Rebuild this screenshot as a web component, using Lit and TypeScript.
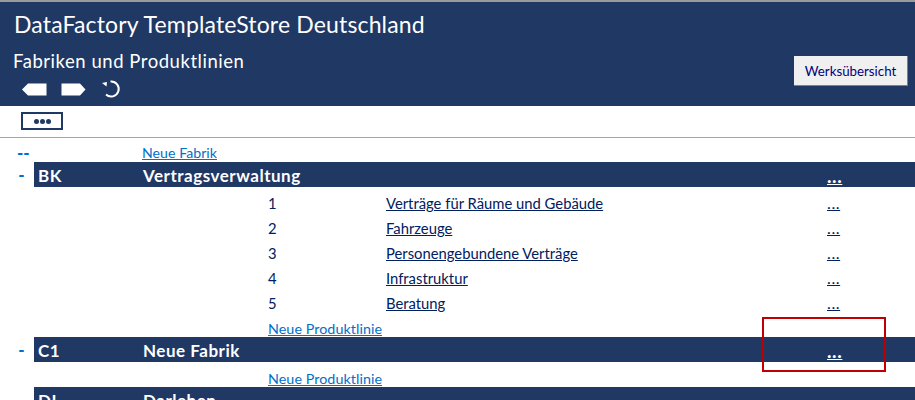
import { LitElement, html, css } from "lit";
import { customElement } from "lit/decorators.js";

const lines = [
  ["1", "Verträge für Räume und Gebäude"],
  ["2", "Fahrzeuge"],
  ["3", "Personengebundene Verträge"],
  ["4", "Infrastruktur"],
  ["5", "Beratung"],
];

@customElement("app-root")
export class AppRoot extends LitElement {
  static styles = css`
    :host {
      display: block;
      width: 915px;
      height: 400px;
      overflow: hidden;
      position: relative;
      background: #fff;
      font-family: Lato, "Open Sans", sans-serif;
      font-size: 14.8px;
      color: #002060;
    }
    .head {
      height: 104px;
      border-top: 2px solid #9a9a9a;
      background: #1f3864;
      color: #fff;
      display: flex;
      justify-content: space-between;
      align-items: flex-start;
    }
    .titles { display: flex; flex-direction: column; }
    .title { font-size: 23px; line-height: 28px; margin: 8px 0 0 14px; letter-spacing: 0.15px; }
    .sub { font-size: 18.5px; line-height: 22px; margin: 12px 0 0 13px; letter-spacing: 0.54px; }
    .nav { display: flex; align-items: center; gap: 14px; margin: 5px 0 0 22px; height: 24px; }
    .nav svg { display: block; }
    .nav .refresh { margin-left: 2px; }
    .btn {
      margin: 54px 7px 0 0;
      width: 114px;
      height: 30px;
      box-sizing: border-box;
      background: #f0f0f0;
      border: none;
      border-right: 1px solid #808080;
      border-bottom: 1px solid #808080;
      color: #000080;
      font: 13.3px Lato, sans-serif;
      padding: 0;
    }
    .tool {
      height: 32px;
      box-sizing: border-box;
      border-bottom: 1px solid #a6a6a6;
      padding: 6px 0 0 21px;
    }
    .more {
      width: 42px;
      height: 18px;
      box-sizing: border-box;
      border: 2px solid #1f3864;
      background: #fff;
      display: flex;
      align-items: center;
      justify-content: center;
      gap: 1px;
    }
    .more i { width: 5px; height: 5px; border-radius: 50%; background: #1f3864; }
    .list { padding-top: 2px; }
    .row {
      display: grid;
      grid-template-columns: 34px 109px 125px 118px 441px 88px;
      height: 25px;
      align-items: center;
      white-space: nowrap;
    }
    .item { padding-top: 7px; box-sizing: border-box; }
    .small { height: 22px; padding-top: 2px; box-sizing: border-box; }
    .sign { color: #0070d0; font-weight: 900; font-size: 17px; text-align: center; padding-left: 9px; box-sizing: border-box; }
    .sign.left { text-align: left; padding-left: 17px; }
    .band {
      background: #1f3864;
      color: #fff;
      font-weight: 700;
      font-size: 17px;
      letter-spacing: 0.52px;
      grid-column: 2 / -1;
      display: grid;
      grid-template-columns: 109px 684px 88px;
      height: 25px;
      box-sizing: border-box;
      padding-top: 2px;
      align-items: center;
    }
    .band span:first-child { padding-left: 4px; }
    .dots { color: inherit; font-size: 19px; letter-spacing: 0.6px; line-height: 18px; }
    .blue { color: #0070c8; text-decoration: underline; font-size: 14.1px; letter-spacing: 0.05px; margin-left: -1px; }
    .blue.item { font-size: 14.3px; letter-spacing: 0.06px; margin-left: 0; }
    .link { text-decoration: underline; color: #002060; }
    .more-link { font-size: 16px; letter-spacing: 0.6px; line-height: 14px; }
    .mark {
      position: absolute;
      left: 762px;
      top: 317px;
      width: 124px;
      height: 55px;
      box-sizing: border-box;
      border: 2px solid #c00000;
    }
  `;

  band(code: string, name: string) {
    return html`<div class="row">
      <span class="sign">-</span>
      <div class="band"><span>${code}</span><span>${name}</span><a class="dots" href="#">...</a></div>
    </div>`;
  }

  render() {
    return html`
      <div class="head">
        <div class="titles">
          <div class="title">DataFactory TemplateStore Deutschland</div>
          <div class="sub">Fabriken und Produktlinien</div>
          <div class="nav">
            <svg width="25" height="13" viewBox="0 0 25 13"><path d="M0 6.500 6 .5H24.500V12.500H6Z" fill="#fff"/></svg>
            <svg width="25" height="13" viewBox="0 0 25 13"><path d="M.5 .5H19L24.500 6.500 19 12.500H.5Z" fill="#fff"/></svg>
            <svg class="refresh" width="20" height="20" viewBox="0 0 20 20"><path d="M8.500 2.600A7.500 7.500 0 1 1 4 15.500" fill="none" stroke="#fff" stroke-width="2"/><path d="M0 4 5 3 4.500 7.500Z" fill="#fff"/></svg>
          </div>
        </div>
        <button class="btn">Werksübersicht</button>
      </div>
      <div class="tool"><div class="more"><i></i><i></i><i></i></div></div>
      <div class="list">
        <div class="row small">
          <span class="sign left">--</span>
          <span></span>
          <a class="blue" href="#">Neue Fabrik</a>
        </div>
        ${this.band("BK", "Vertragsverwaltung")}
        ${lines.map(
          ([n, t]) => html`<div class="row">
            <span></span><span></span><span></span>
            <span class="item">${n}</span>
            <a class="link item" href="#">${t}</a>
            <a class="link item more-link" href="#">...</a>
          </div>`
        )}
        <div class="row">
          <span></span><span></span><span></span>
          <a class="blue item" href="#">Neue Produktlinie</a>
        </div>
        ${this.band("C1", "Neue Fabrik")}
        <div class="row">
          <span></span><span></span><span></span>
          <a class="blue item" href="#">Neue Produktlinie</a>
        </div>
        ${this.band("DL", "Darlehen")}
      </div>
      <div class="mark"></div>
    `;
  }
}
